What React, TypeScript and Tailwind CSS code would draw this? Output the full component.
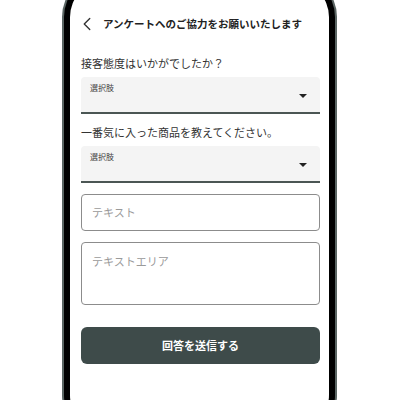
import { ChevronLeft } from "lucide-react"

const font = { fontFamily: '"Noto Sans CJK JP", "Noto Sans", sans-serif' }

function SelectBox({ label }: { label: string }) {
  return (
    <div className="relative h-[37px] w-full rounded-t-[4px] border-b-2 border-[#4b5654] bg-[#f4f4f4]">
      <span className="absolute left-[9px] top-[7px] text-[8px] leading-none text-[#444]">{label}</span>
      <span className="absolute right-[13px] top-[17px] h-0 w-0 border-x-[4px] border-t-[4px] border-x-transparent border-t-[#222]" />
    </div>
  )
}

export default function App() {
  return (
    <div className="h-[400px] w-[400px] overflow-hidden bg-white" style={font}>
      <div className="ml-[62px] mt-[-27px] w-[275px] rounded-[44px] bg-[#5a6563] p-[2px]">
        <div className="rounded-[42px] bg-black p-[6px]">
          <div className="h-[450px] rounded-[36px] bg-white pl-[11px] pr-[9px] pt-[32px]">
            <div className="flex items-center gap-[5px]">
              <ChevronLeft className="ml-[-5px] h-[22px] w-[22px] text-[#333]" strokeWidth={1.5} />
              <h1 className="text-[10.5px] font-bold leading-none text-[#222]">アンケートへのご協力をお願いいたします</h1>
            </div>

            <p className="mt-[23px] text-[11px] leading-none text-[#333]">接客態度はいかがでしたか？</p>
            <div className="mt-[8px]">
              <SelectBox label="選択肢" />
            </div>

            <p className="mt-[13px] text-[11px] leading-none text-[#333]">一番気に入った商品を教えてください。</p>
            <div className="mt-[8px]">
              <SelectBox label="選択肢" />
            </div>

            <div className="mt-[11px] flex h-[37px] items-center rounded-[4px] border border-[#8c8c8c] px-[10px]">
              <span className="text-[11px] leading-none text-[#9a9a9a]">テキスト</span>
            </div>

            <div className="mt-[11px] h-[63px] rounded-[4px] border border-[#8c8c8c] px-[10px] pt-[13px]">
              <span className="block text-[11px] leading-none text-[#9a9a9a]">テキストエリア</span>
            </div>

            <button className="mt-[22px] flex h-[37px] w-full items-center justify-center rounded-[6px] bg-[#3e4b4a] text-[11px] font-bold text-white">
              回答を送信する
            </button>
          </div>
        </div>
      </div>
    </div>
  )
}
